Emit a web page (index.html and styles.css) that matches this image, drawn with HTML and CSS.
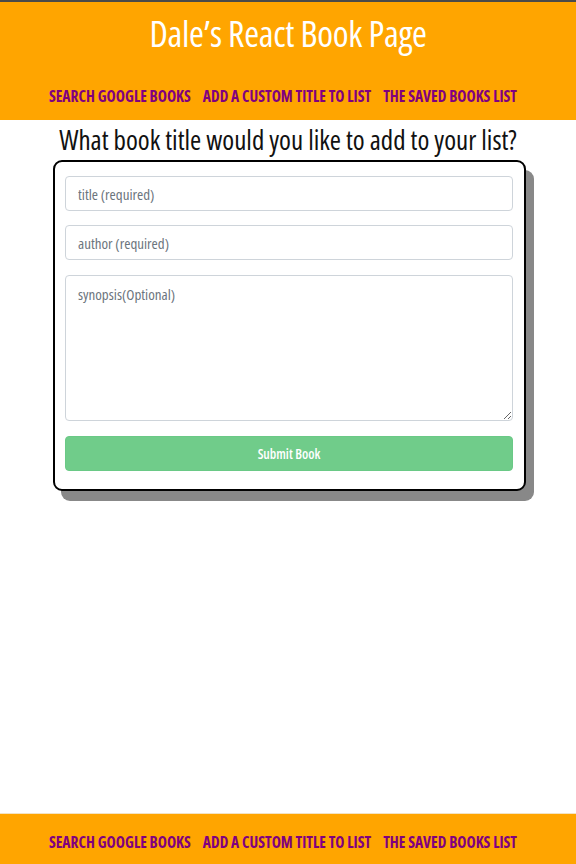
FILE: index.html
```html
<!DOCTYPE html>
<html>
<head>
<meta charset="utf-8">
<link rel="stylesheet" href="styles.css">
</head>
<body>
<div class="page">
  <header class="top">
    <h1 class="brand">Dale’s React Book Page</h1>
    <nav class="nav">
      <a href="#">SEARCH GOOGLE BOOKS</a>
      <a href="#">ADD A CUSTOM TITLE TO LIST</a>
      <a href="#">THE SAVED BOOKS LIST</a>
    </nav>
  </header>
  <main class="main">
    <h2 class="question">What book title would you like to add to your list?</h2>
    <form class="card">
      <input class="field" type="text" placeholder="title (required)">
      <input class="field" type="text" placeholder="author (required)">
      <textarea class="field area" placeholder="synopsis(Optional)"></textarea>
      <button class="submit" type="button">Submit Book</button>
    </form>
  </main>
  <footer class="foot">
    <nav class="nav">
      <a href="#">SEARCH GOOGLE BOOKS</a>
      <a href="#">ADD A CUSTOM TITLE TO LIST</a>
      <a href="#">THE SAVED BOOKS LIST</a>
    </nav>
  </footer>
</div>
</body>
</html>
```
FILE: styles.css
```css
* { box-sizing: border-box; }
html, body { margin: 0; padding: 0; }
body { background: #fff; font-family: "Open Sans", sans-serif; }
.page { min-height: 864px; display: flex; flex-direction: column; }
.top {
  background: #ffa500;
  border-top: 2px solid #4a4a4a;
  height: 120px;
  display: flex;
  flex-direction: column;
  align-items: center;
}
.brand {
  margin: 0;
  height: 64px;
  display: flex;
  align-items: center;
  color: #fff;
  font-family: "Open Sans", sans-serif;
  font-stretch: 75%;
  font-weight: 500;
  font-size: 36px;
  letter-spacing: -0.3px;
}
.nav {
  display: flex;
  gap: 12px;
  justify-content: center;
  align-items: center;
  padding-right: 10px;
}
.top .nav { height: 56px; padding-top: 8px; }
.nav a {
  color: #800080;
  text-decoration: none;
  font-family: "Open Sans", sans-serif;
  font-stretch: 75%;
  font-weight: 700;
  font-size: 15.5px;
}
.main { display: flex; flex-direction: column; align-items: center; }
.question {
  margin: 0;
  height: 38px;
  display: flex;
  align-items: center;
  font-family: "Open Sans", sans-serif;
  font-stretch: 75%;
  font-weight: 500;
  font-size: 27px;
  color: #111;
}
.card {
  width: 473px;
  margin-left: 3px;
  margin-top: 2px;
  border: 2px solid #000;
  border-radius: 9px;
  box-shadow: 8px 10px 0 #888;
  background: #fff;
  padding: 14px 11px 18px 10px;
  display: flex;
  flex-direction: column;
  gap: 15px;
}
.field {
  height: 35px;
  border: 1px solid #ced4da;
  border-radius: 4px;
  padding: 0 12px;
  font-family: "Open Sans", sans-serif;
  font-stretch: 75%;
  font-size: 15px;
  color: #495057;
}
.field:first-child { margin-bottom: -1px; }
.field::placeholder { color: #6c757d; }
.area {
  height: 146px;
  padding-top: 8px;
  resize: vertical;
}
.submit {
  height: 35px;
  border: 1px solid #6ac986;
  border-radius: 4px;
  background: #70cc8a;
  color: #fff;
  font-family: "Open Sans", sans-serif;
  font-stretch: 75%;
  font-weight: 600;
  font-size: 13.5px;
}
.foot {
  margin-top: auto;
  background: #ffa500;
  height: 51px;
  border-top: 1px solid #f3e3c3;
  display: flex;
  justify-content: center;
  align-items: center;
  padding-top: 6px;
}
```
